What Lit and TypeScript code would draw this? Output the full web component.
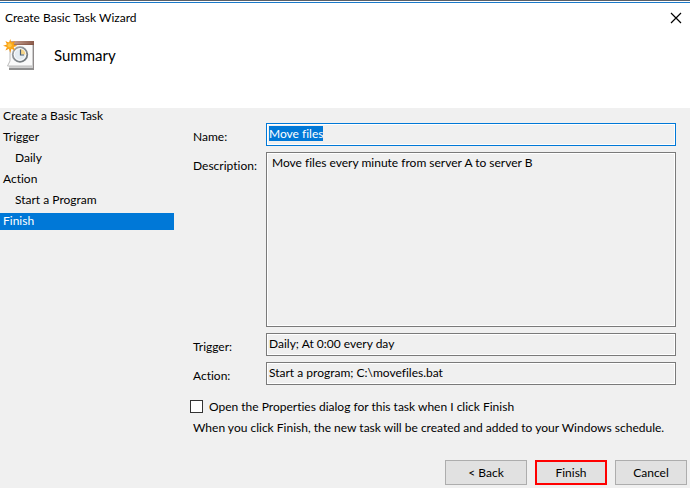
import { LitElement, html, css } from "lit";
import { customElement, query } from "lit/decorators.js";
import { classMap } from "lit/directives/class-map.js";

interface Step {
  label: string;
  nested?: boolean;
  current?: boolean;
}

const STEPS: Step[] = [
  { label: "Create a Basic Task" },
  { label: "Trigger" },
  { label: "Daily", nested: true },
  { label: "Action" },
  { label: "Start a Program", nested: true },
  { label: "Finish", current: true },
];

@customElement("task-icon")
class TaskIcon extends LitElement {
  static styles = css`
    :host { display: block; width: 32px; height: 32px; }
    svg { display: block; }
  `;

  render() {
    return html`
      <svg width="32" height="32" viewBox="0 0 32 32" aria-hidden="true">
        <defs>
          <linearGradient id="bar" x1="0" x2="1">
            <stop offset="0" stop-color="#c9a392" />
            <stop offset="1" stop-color="#8a5a4a" />
          </linearGradient>
          <linearGradient id="ring" x1="0" y1="0" x2="1" y2="1">
            <stop offset="0" stop-color="#a4a9ad" />
            <stop offset="1" stop-color="#6c7276" />
          </linearGradient>
        </defs>
        <path d="M6 29h25v2H6z" fill="#8f8f8f" />
        <path d="M6 27h24v2H6z" fill="#d0d0d0" />
        <path d="M30 3h1v28h-1z" fill="#8f8a8a" />
        <path d="M7 3h22v24H4.500l2.500-5z" fill="#fafafa" />
        <path d="M29 6h1v23h-1z" fill="#cccccc" />
        <path d="M7 8v14l-2.500 5H29" fill="none" stroke="#bcbcbc" />
        <path d="M8 2h23v4H8z" fill="url(#bar)" />
        <path d="M8 5h23v1H8z" fill="#7b4b3b" opacity=".5" />
        <circle cx="17" cy="15.500" r="7.200" fill="#e4ecf2" stroke="url(#ring)" stroke-width="2" />
        <circle cx="17" cy="15.500" r="5.800" fill="none" stroke="#fff" />
        <path d="M17 15.500V10a5.500 5.500 0 0 1 5.500 5.500z" fill="#f5d58a" />
        <path d="M17.500 10.500V16H21" fill="none" stroke="#4c5f70" stroke-width="1.200" />
        <path
          d="M7.200 0l1.200 3.700L12 2l-1.500 3.500 4 1.200-4 1.300L12 11.500l-3.600-1.700L7.200 14 6 9.800 2.400 11.500 4 8 0 6.700l4-1.200L2.400 2 6 3.700z"
          fill="#f79a10" />
        <circle cx="7.200" cy="6.700" r="3.600" fill="#fbaa1c" />
        <circle cx="6.700" cy="6.200" r="2" fill="#ffc648" />
      </svg>
    `;
  }
}

@customElement("app-root")
class AppRoot extends LitElement {
  static styles = css`
    :host {
      display: flex;
      flex-direction: column;
      box-sizing: border-box;
      min-height: 100vh;
      border-top: 1px solid #5b5f66;
      background: #f0f0f0;
      color: #000;
      font: 12px/17px Lato, "Open Sans", sans-serif;
      font-variant-ligatures: none;
    }
    * { box-sizing: border-box; }
    header { border-top: 1px solid #fff; background: #fff; height: 107px; }
    .accent { height: 1px; background: #1979ca; }
    .titlebar {
      display: flex;
      align-items: center;
      justify-content: space-between;
      height: 29px;
      padding: 0 8px 0 5px;
    }
    .title, h1 { margin: 0; font-weight: 400; }
    .close {
      display: block;
      padding: 0;
      border: 0;
      background: none;
      width: 12px;
      height: 12px;
    }
    .close svg { display: block; }
    .banner { display: flex; align-items: center; gap: 19px; padding: 7px 3px; }
    h1 { font-size: 15px; line-height: 22px; }
    main { flex: 1; display: flex; gap: 16px; }
    ol {
      list-style: none;
      margin: 0;
      padding: 0;
      width: 174px;
      flex: none;
      display: flex;
      flex-direction: column;
      gap: 4px;
    }
    li { padding: 0 0 2px 3px; line-height: 15px; }
    .nested { padding-left: 15px; }
    .current { background: #0078d7; color: #fff; }
    form {
      flex: 1;
      display: flex;
      flex-direction: column;
      padding: 15px 14px 0 0;
    }
    .fields {
      flex: 1;
      display: grid;
      grid-template-columns: 73px 1fr;
      grid-template-rows: auto 1fr auto auto;
      row-gap: 6px;
      padding-left: 3px;
    }
    .fields label { padding-top: 5px; }
    .field {
      display: block;
      width: 100%;
      height: 23px;
      margin: 0;
      padding: 0 2px 2px;
      border: 1px solid #7a7a7a;
      border-radius: 0;
      outline: 0;
      box-shadow: inset 0 0 0 1px #fff;
      background: #f0f0f0;
      color: inherit;
      font: inherit;
    }
    .fields .field { grid-column: 2; }
    .fields .active { border-color: #0078d7; }
    .area { height: 100%; min-height: 60px; padding: 1px 5px; resize: none; }
    .field::selection { background: #0078d7; color: #fff; }
    .option { display: flex; align-items: center; gap: 6px; margin-top: 13px; }
    .check {
      appearance: none;
      width: 13px;
      height: 13px;
      margin: 0;
      border: 1px solid #333;
      background: #fff;
    }
    .note { margin: 4px 0 0 3px; }
    footer {
      display: flex;
      justify-content: flex-end;
      gap: 8px;
      padding: 24px 3px 3px;
    }
    .button {
      width: 72px;
      height: 25px;
      padding: 0;
      border: 1px solid #adadad;
      border-radius: 0;
      background: #e1e1e1;
      color: inherit;
      font: inherit;
    }
    .back { width: 82px; }
    .marked { border: 2px solid #f00; }
  `;

  @query("#name") nameField!: HTMLInputElement;

  firstUpdated() {
    this.nameField.focus();
    this.nameField.select();
  }

  render() {
    return html`
      <header>
        <div class="accent"></div>
        <div class="titlebar">
          <span class="title">Create Basic Task Wizard</span>
          <button class="close" type="button" aria-label="Close">
            <svg width="12" height="12" viewBox="0 0 12 12">
              <path d="M1 1l10 10M11 1L1 11" stroke="#000" stroke-width="1.200" />
            </svg>
          </button>
        </div>
        <div class="banner">
          <task-icon></task-icon>
          <h1>Summary</h1>
        </div>
      </header>
      <main>
        <ol>
          ${STEPS.map(
            (s) => html`<li class=${classMap({ nested: !!s.nested, current: !!s.current })}>${s.label}</li>`
          )}
        </ol>
        <form>
          <div class="fields">
            <label for="name">Name:</label>
            <input class="field active" id="name" readonly value="Move files" />
            <label for="description">Description:</label>
            <textarea class="field area" id="description" readonly .value=${"Move files every minute from server A to server B"}></textarea>
            <label for="trigger">Trigger:</label>
            <input class="field" id="trigger" readonly value="Daily; At 0:00 every day" />
            <label for="action">Action:</label>
            <input class="field" id="action" readonly value="Start a program; C:\\movefiles.bat" />
          </div>
          <div class="option">
            <input class="check" type="checkbox" id="open" />
            <label for="open">Open the Properties dialog for this task when I click Finish</label>
          </div>
          <p class="note">When you click Finish, the new task will be created and added to your Windows schedule.</p>
        </form>
      </main>
      <footer>
        <button class="button back" type="button">&lt; Back</button>
        <button class="button marked" type="button">Finish</button>
        <button class="button" type="button">Cancel</button>
      </footer>
    `;
  }
}
